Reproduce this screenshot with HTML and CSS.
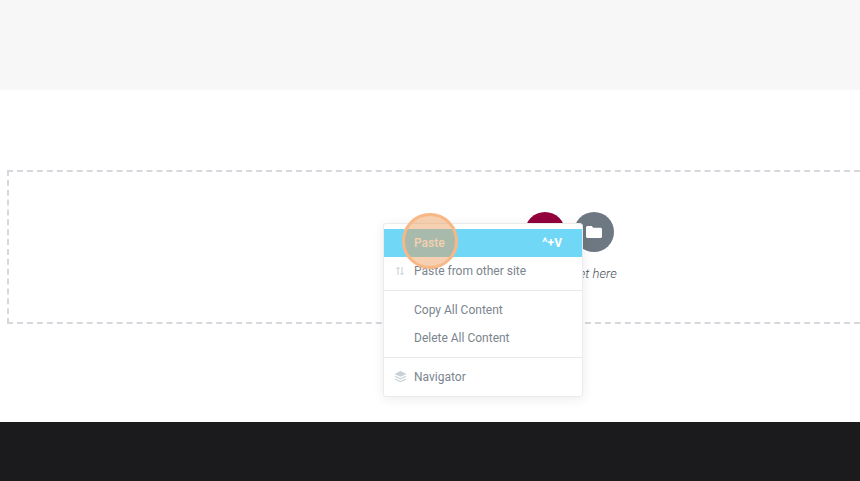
FILE: index.html
```html
<!DOCTYPE html>
<html lang="en">
<head>
    <meta charset="UTF-8">
    <title>Elementor</title>
    <link rel="stylesheet" href="styles.css">
</head>
<body>
    <div class="top-band"></div>
    <div class="content">
        <div class="drop-area">
            <div class="drop-inner">
                <div class="drop-buttons">
                    <span class="round-btn maroon"></span>
                    <span class="round-btn gray">
                        <svg width="16" height="14" viewBox="0 0 16 14"><path d="M1.500 1h4.200l1.600 1.700h7.200c.8 0 1.500.7 1.500 1.500v7.300c0 .8-.7 1.500-1.500 1.500h-13C.7 13 0 12.300 0 11.500v-9C0 1.700.7 1 1.500 1z" fill="#fff"/></svg>
                    </span>
                </div>
                <div class="drop-text">Drag widget here</div>
            </div>
        </div>
    </div>
    <div class="footer"></div>

    <!-- context menu -->
    <div class="menu">
        <div class="menu-group">
            <div class="menu-item active"><span class="menu-icon"></span><span class="menu-label">Paste</span><span class="shortcut">^+V</span></div>
            <div class="menu-item">
                <span class="menu-icon">
                    <svg width="11" height="10" viewBox="0 0 11 10"><path d="M4 9V1.500M2.500 3L4 1.300 5.500 3M8 1v7.500M6.500 7L8 8.700 9.500 7" fill="none" stroke="#c5cbd0" stroke-width="1"/></svg>
                </span>
                <span class="menu-label">Paste from other site</span>
            </div>
        </div>
        <div class="menu-group">
            <div class="menu-item"><span class="menu-icon"></span><span class="menu-label">Copy All Content</span></div>
            <div class="menu-item"><span class="menu-icon"></span><span class="menu-label">Delete All Content</span></div>
        </div>
        <div class="menu-group">
            <div class="menu-item">
                <span class="menu-icon">
                    <svg width="13" height="12" viewBox="0 0 13 12"><path d="M6.500 0l6 2.900-6 2.900-6-2.900z" fill="#c9d1d6"/><path d="M1.800 5l4.700 2.300L11.200 5l1.300.7-6 2.900-6-2.900z" fill="#c9d1d6"/><path d="M1.800 7.700l4.700 2.300 4.700-2.300 1.300.7-6 2.900-6-2.900z" fill="#c9d1d6"/></svg>
                </span>
                <span class="menu-label">Navigator</span>
            </div>
        </div>
    </div>

    <!-- click marker -->
    <div class="click-marker"></div>
</body>
</html>
```

FILE: styles.css
```css
/* page styles */

body {
    margin: 0;
    height: 481px;
    overflow: hidden;
    position: relative;
    display: flex;
    flex-direction: column;
    background-color: #fff;
    font-family: Roboto, "Liberation Sans", sans-serif;
}
.top-band {
    height: 90px;
    background-color: #f7f7f7;
}
.content {
    height: 332px;
    padding: 80px 0 0 7px;
    box-sizing: border-box;
}
.footer {
    height: 59px;
    background-color: #1b1b1d;
}
/* the box runs on past the right edge of the window, so its centre is off to the right */
.drop-area {
    height: 154px;
    box-sizing: border-box;
    border: 2px dashed #d5d8dc;
    border-right: 0;
    overflow: hidden;
}
.drop-inner {
    width: 1121px;
    padding-top: 40px;
    display: flex;
    flex-direction: column;
    align-items: center;
}
.drop-buttons {
    display: flex;
    gap: 9px;
}
.round-btn {
    width: 40px;
    height: 40px;
    border-radius: 50%;
    display: flex;
    align-items: center;
    justify-content: center;
}
.maroon {
    background-color: #93003c;
}
.gray {
    background-color: #6d7882;
}
.drop-text {
    margin-top: 14px;
    padding-left: 1px;
    font-size: 13px;
    line-height: 16px;
    font-style: italic;
    font-weight: 300;
    color: #4c5157;
}

/* context menu */
.menu {
    position: absolute;
    left: 383px;
    top: 223px;
    width: 200px;
    box-sizing: border-box;
    background-color: #fff;
    border: 1px solid #e9ebed;
    border-radius: 3px;
    box-shadow: 0 2px 12px rgba(0, 0, 0, 0.08);
}
.menu-group {
    padding: 5px 0;
    border-bottom: 1px solid #e6e9ec;
}
.menu-group:last-child {
    border-bottom: 0;
}
.menu-item {
    height: 28px;
    display: flex;
    align-items: center;
    padding: 0 20px 0 10px;
    font-size: 12px;
    color: #7b848d;
}
.menu-item.active {
    background-color: #71d7f7;
    color: #fff;
    font-weight: 500;
}
.menu-icon {
    width: 20px;
    display: flex;
    align-items: center;
}
.shortcut {
    margin-left: auto;
    font-weight: 700;
}

/* click marker */
.click-marker {
    position: absolute;
    left: 402px;
    top: 213px;
    width: 56px;
    height: 56px;
    box-sizing: border-box;
    border: 3px solid #f7b885;
    border-radius: 50%;
    background-color: rgba(236, 150, 80, 0.45);
}
```
